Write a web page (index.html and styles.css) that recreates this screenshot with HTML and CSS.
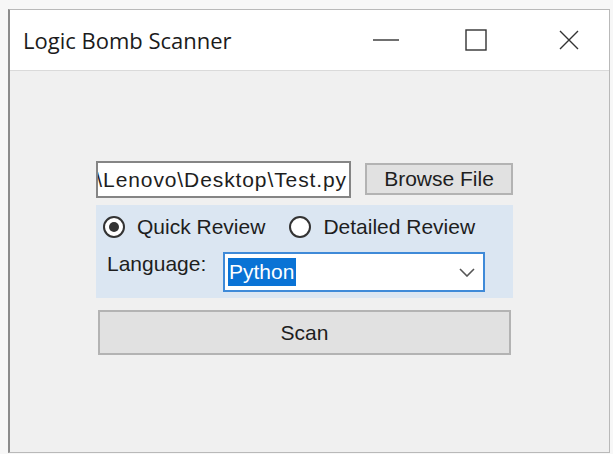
FILE: index.html
```html
<!DOCTYPE html>
<html lang="en">
<head>
<meta charset="utf-8">
<title>Logic Bomb Scanner</title>
<link rel="stylesheet" href="styles.css">
</head>
<body>
<div class="window">
  <header class="titlebar">
    <span class="title">Logic Bomb Scanner</span>
    <div class="caption-btn minimize">
      <svg width="26" height="2" viewBox="0 0 26 2"><line x1="0" y1="1" x2="26" y2="1" stroke="#333" stroke-width="1.4"/></svg>
    </div>
    <div class="caption-btn maximize">
      <svg width="22" height="22" viewBox="0 0 22 22"><rect x="1" y="1" width="20" height="20" fill="none" stroke="#333" stroke-width="1.4"/></svg>
    </div>
    <div class="caption-btn close">
      <svg width="20" height="20" viewBox="0 0 20 20"><path d="M1 1 L19 19 M19 1 L1 19" stroke="#333" stroke-width="1.4" fill="none"/></svg>
    </div>
  </header>
  <main class="client">
    <div class="form">
      <div class="file-row">
        <div class="path-box"><span class="path-text">\Lenovo\Desktop\Test.py</span></div>
        <button class="btn browse">Browse File</button>
      </div>
      <div class="options">
        <div class="radio-row">
          <label class="radio"><span class="dot checked"></span>Quick Review</label>
          <label class="radio"><span class="dot"></span>Detailed Review</label>
        </div>
        <div class="lang-row">
          <span class="lang-label">Language:</span>
          <div class="combo">
            <span class="combo-value">Python</span>
            <svg class="chevron" width="16" height="9" viewBox="0 0 16 9"><path d="M1 1 L8 8 L15 1" fill="none" stroke="#555" stroke-width="1.6"/></svg>
          </div>
        </div>
      </div>
      <button class="btn scan">Scan</button>
    </div>
  </main>
</div>
</body>
</html>
```
FILE: styles.css
```css
html, body {
  margin: 0;
  padding: 0;
  background: #f7f7f7;
}

body {
  width: 613px;
  height: 454px;
  overflow: hidden;
}

.window {
  box-sizing: border-box;
  margin: 9px 3px 0 8px;
  height: 444px;
  border: 1px solid #b9b9b9;
  border-left: 2px solid #8c8c8c;
  display: flex;
  flex-direction: column;
  background: #f0f0f0;
}

.titlebar {
  height: 60px;
  flex: none;
  display: flex;
  align-items: center;
  background: #ffffff;
  border-bottom: 1px solid #dadada;
}

.title {
  flex: 1;
  padding-left: 13px;
  font-family: "Open Sans", "Noto Sans", sans-serif;
  font-size: 22px;
  color: #1b1b1b;
}

.caption-btn {
  height: 60px;
  display: flex;
  align-items: center;
  justify-content: center;
}

.minimize { width: 90px; }
.maximize { width: 90px; }
.close { width: 88px; padding-left: 8px; box-sizing: border-box; }

.client {
  flex: 1;
  font-family: "Liberation Sans", Arial, sans-serif;
  font-size: 21px;
  color: #1e1e1e;
}

.form {
  width: 417px;
  margin: 90px 0 0 86px;
}

.file-row {
  display: flex;
  align-items: flex-start;
  gap: 14px;
}

.path-box {
  box-sizing: border-box;
  width: 255px;
  height: 37px;
  border: 2px solid #858585;
  background: #fff;
  display: flex;
  align-items: center;
  justify-content: flex-end;
  overflow: hidden;
  padding-right: 2px;
}

.path-text {
  white-space: nowrap;
  flex: none;
  letter-spacing: 0.9px;
}

.btn {
  box-sizing: border-box;
  font-family: "Liberation Sans", Arial, sans-serif;
  font-size: 21px;
  color: #1e1e1e;
  background: #e1e1e1;
  border: 2px solid #b3b3b3;
  padding: 0;
}

.browse {
  width: 148px;
  height: 32px;
  margin-top: 2px;
}

.options {
  margin-top: 7px;
  height: 93px;
  box-sizing: border-box;
  background: #dbe6f2;
  padding: 11px 0 0 7px;
}

.radio-row {
  display: flex;
  gap: 24px;
}

.radio {
  display: flex;
  align-items: center;
  gap: 12px;
  height: 22px;
}

.dot {
  box-sizing: border-box;
  width: 22px;
  height: 22px;
  border-radius: 50%;
  border: 2px solid #333;
  background: #fff;
  display: flex;
  align-items: center;
  justify-content: center;
}

.dot.checked::after {
  content: "";
  width: 10px;
  height: 10px;
  border-radius: 50%;
  background: #333;
}

.lang-row {
  display: flex;
  align-items: flex-start;
  margin-top: 14px;
}

.lang-label {
  width: 120px;
  padding-left: 4px;
  line-height: 24px;
  box-sizing: border-box;
}

.combo {
  box-sizing: border-box;
  width: 262px;
  height: 40px;
  border: 2px solid #3f8ad8;
  background: #fff;
  display: flex;
  align-items: center;
  justify-content: space-between;
  padding: 0 8px 0 3px;
}

.combo-value {
  background: #0a73d5;
  color: #fff;
  line-height: 28px;
  padding: 0 2px 0 1px;
}

.scan {
  display: block;
  width: 413px;
  height: 45px;
  margin: 12px 0 0 2px;
}
```
